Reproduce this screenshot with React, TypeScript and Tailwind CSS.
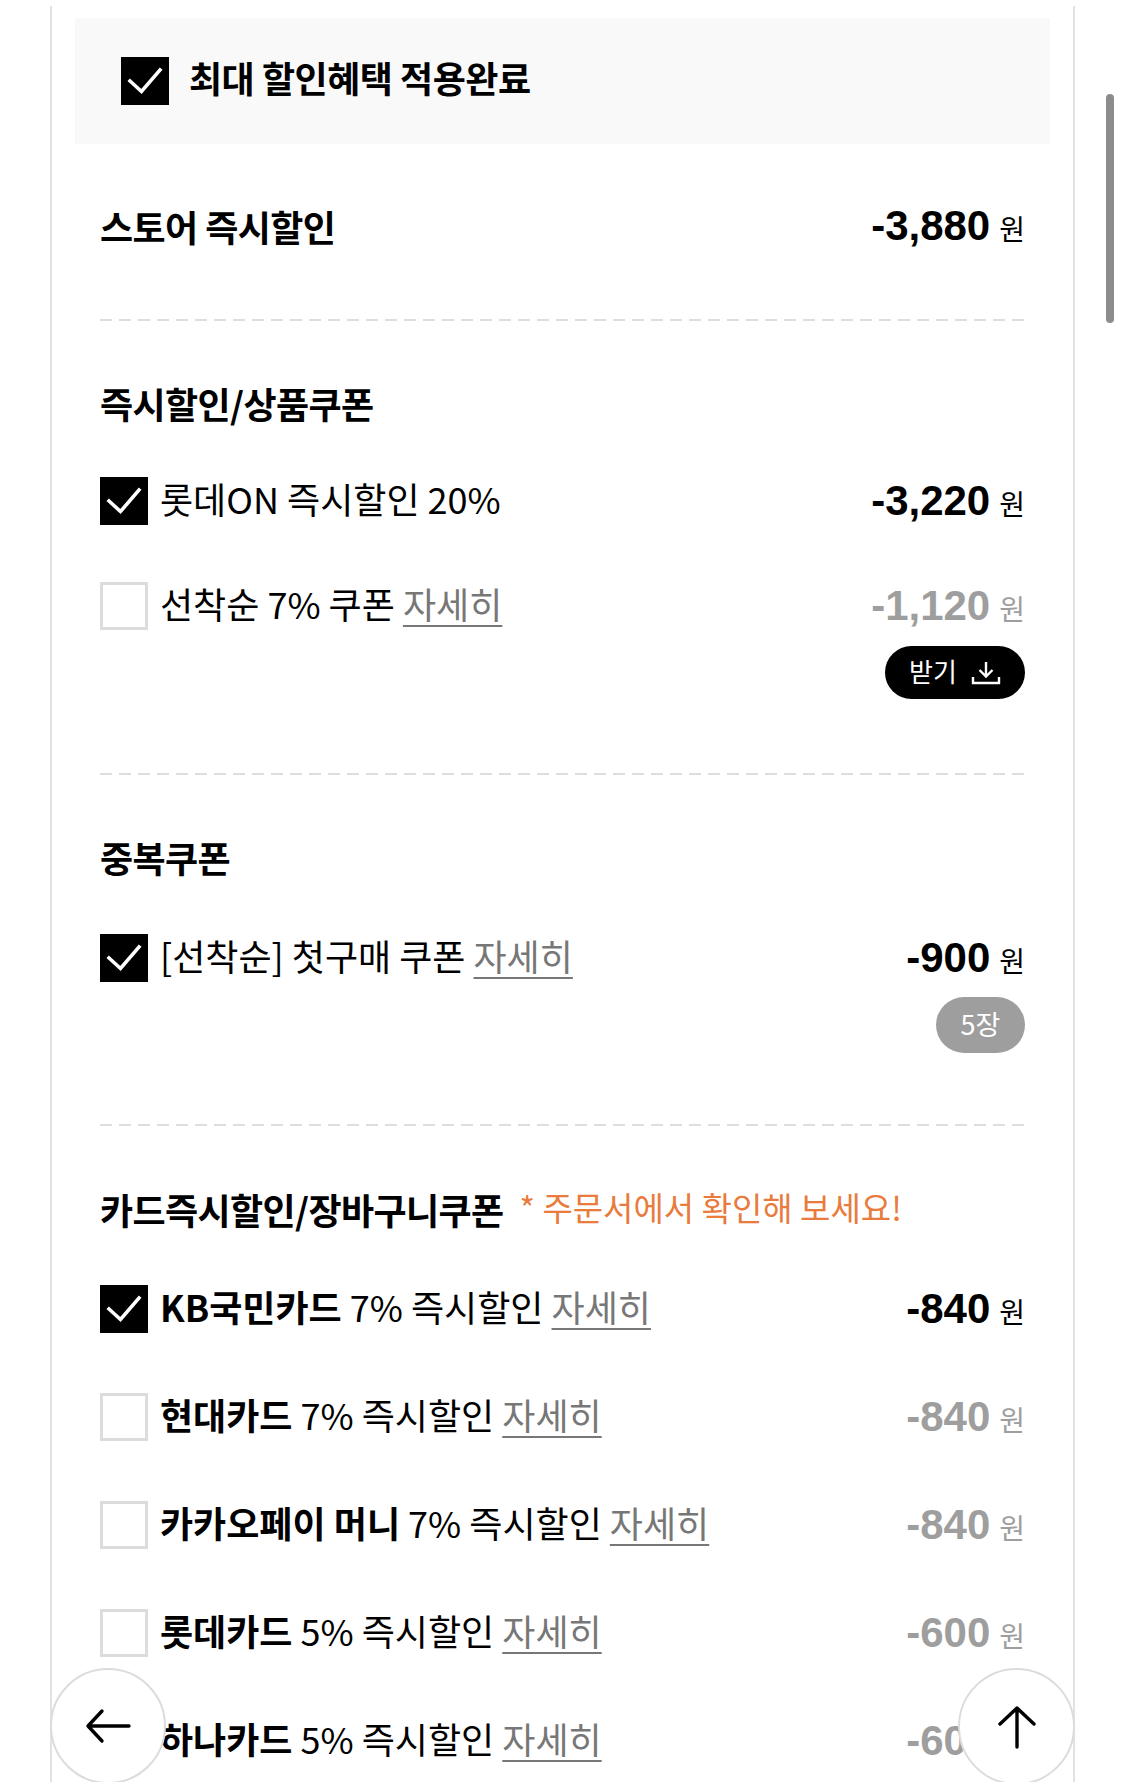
import React from 'react';

const kr = '[font-family:"Noto_Sans_CJK_KR","Noto_Sans",sans-serif]';
const num = '[font-family:"Liberation_Sans",Arial,sans-serif]';

const Check = ({ on }: { on: boolean }) =>
  on ? (
    <span className="flex h-[48px] w-[48px] shrink-0 items-center justify-center bg-black">
      <svg width="48" height="48" viewBox="0 0 48 48" fill="none">
        <path d="M9 24 L20.5 34.5 L39 13" stroke="white" strokeWidth="3.6" strokeLinecap="square" />
      </svg>
    </span>
  ) : (
    <span className="block h-[48px] w-[48px] shrink-0 border-[3px] border-[#dcdcdc] bg-white" />
  );

const Price = ({ value, dim }: { value: string; dim?: boolean }) => (
  <div className={`flex items-baseline gap-[9px] ${dim ? 'text-[#9e9e9e]' : 'text-black'}`}>
    <span className={`${num} text-[42px] font-bold leading-none`}>{value}</span>
    <span className={`${kr} text-[28px] leading-none`}>원</span>
  </div>
);

const Divider = () => (
  <div className="h-[2px] w-full bg-[linear-gradient(to_right,#dedede_12px,transparent_12px)] bg-[length:19px_2px]" />
);

const More = () => <span className="text-[#777] underline decoration-[2px] underline-offset-[6px]">자세히</span>;

const Row = ({
  on,
  children,
  value,
  className = '',
}: {
  on: boolean;
  children: React.ReactNode;
  value: string;
  className?: string;
}) => (
  <div className={`flex items-center justify-between ${className}`}>
    <div className="flex items-center gap-[12px]">
      <Check on={on} />
      <span className="pb-[7px] text-[36px] leading-none whitespace-nowrap">{children}</span>
    </div>
    <Price value={value} dim={!on} />
  </div>
);

const Title = ({ children }: { children: React.ReactNode }) => (
  <h2 className="text-[36px] font-bold leading-[48px] tracking-[-0.6px] whitespace-nowrap">{children}</h2>
);

export default function App() {
  return (
    <div className={`relative h-[1782px] w-[1125px] overflow-hidden bg-white text-black ${kr}`}>
      <div className="ml-[50px] mt-[6px] h-[1800px] w-[1025px] border-x-2 border-[#e2e2e2] pt-[12px]">
        <div className="mx-[23px] flex h-[126px] items-center gap-[20px] bg-[#f9f9f9] pl-[46px]">
          <Check on />
          <span className="pb-[9px] text-[36px] font-bold leading-none tracking-[-0.5px]">최대 할인혜택 적용완료</span>
        </div>

        <div className="px-[48px]">
          <div className="flex h-[175px] items-center justify-between pb-[12px]">
            <Title>스토어 즉시할인</Title>
            <Price value="-3,880" />
          </div>
          <Divider />

          <div className="pb-[74px] pt-[58px]">
            <Title>즉시할인/상품쿠폰</Title>
            <Row on value="-3,220" className="mt-[50px]">
              롯데ON 즉시할인 20%
            </Row>
            <Row on={false} value="-1,120" className="mt-[57px]">
              선착순 7% 쿠폰 <More />
            </Row>
            <div className="mt-[16px] flex justify-end">
              <button className="flex h-[53px] w-[140px] items-center justify-center gap-[14px] rounded-full bg-black text-[26px] text-white">
                <span className="pb-[4px] leading-none">받기</span>
                <svg width="30" height="24" viewBox="0 0 30 24" fill="none" stroke="white" strokeWidth="2.4">
                  <path d="M15 1 V15 M8.5 9 L15 15.5 L21.5 9" />
                  <path d="M2 16 V22 H28 V16" />
                </svg>
              </button>
            </div>
          </div>
          <Divider />

          <div className="pb-[71px] pt-[58px]">
            <Title>중복쿠폰</Title>
            <Row on value="-900" className="mt-[53px]">
              [선착순] 첫구매 쿠폰 <More />
            </Row>
            <div className="mt-[15px] flex justify-end">
              <span className="flex h-[56px] w-[89px] items-center justify-center rounded-full bg-[#9e9e9e] pb-[4px] text-[27px] leading-none text-white">
                5장
              </span>
            </div>
          </div>
          <Divider />

          <div className="pt-[59px]">
            <div className="flex items-center gap-[16px]">
              <Title>카드즉시할인/장바구니쿠폰</Title>
              <span className="pb-[4px] text-[33px] leading-none whitespace-nowrap text-[#e97b3c]">* 주문서에서 확인해 보세요!</span>
            </div>
            <Row on value="-840" className="mt-[52px]">
              <b>KB국민카드</b> 7% 즉시할인 <More />
            </Row>
            <Row on={false} value="-840" className="mt-[60px]">
              <b>현대카드</b> 7% 즉시할인 <More />
            </Row>
            <Row on={false} value="-840" className="mt-[60px]">
              <b>카카오페이 머니</b> 7% 즉시할인 <More />
            </Row>
            <Row on={false} value="-600" className="mt-[60px]">
              <b>롯데카드</b> 5% 즉시할인 <More />
            </Row>
            <Row on={false} value="-600" className="mt-[60px]">
              <b>하나카드</b> 5% 즉시할인 <More />
            </Row>
          </div>
        </div>
      </div>

      {/* overlay scrollbar */}
      <div className="absolute left-[1106px] top-[94px] h-[229px] w-[8px] rounded-full bg-[#8c8c8c]" />

      {/* floating buttons */}
      <button className="absolute left-[50px] top-[1668px] flex h-[116px] w-[116px] items-center justify-center rounded-full border-2 border-[#dcdcdc] bg-white">
        <svg width="46" height="36" viewBox="0 0 46 36" fill="none" stroke="black" strokeWidth="3.4" strokeLinecap="round" strokeLinejoin="round">
          <path d="M44 18 H3 M17 3 L3 18 L17 33" />
        </svg>
      </button>
      <button className="absolute left-[958px] top-[1668px] flex h-[117px] w-[117px] items-center justify-center rounded-full border-2 border-[#dcdcdc] bg-white">
        <svg width="40" height="44" viewBox="0 0 40 44" fill="none" stroke="black" strokeWidth="3.4" strokeLinecap="round" strokeLinejoin="round">
          <path d="M20 42 V3 M3 19 L20 3 L37 19" />
        </svg>
      </button>
    </div>
  );
}
